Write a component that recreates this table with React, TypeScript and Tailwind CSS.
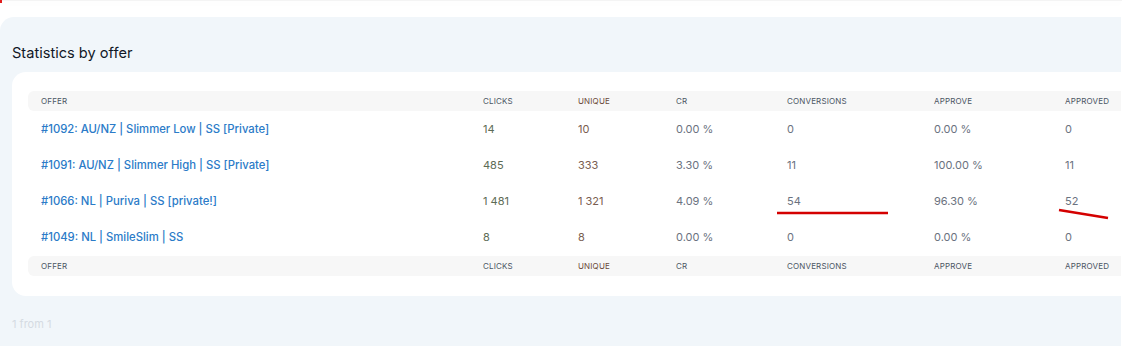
const rows = [
  { offer: '#1092: AU/NZ | Slimmer Low | SS [Private]', clicks: '14', unique: '10', cr: '0.00 %', conv: '0', approve: '0.00 %', approved: '0' },
  { offer: '#1091: AU/NZ | Slimmer High | SS [Private]', clicks: '485', unique: '333', cr: '3.30 %', conv: '11', approve: '100.00 %', approved: '11' },
  { offer: '#1066: NL | Puriva | SS [private!]', clicks: '1 481', unique: '1 321', cr: '4.09 %', conv: '54', approve: '96.30 %', approved: '52' },
  { offer: '#1049: NL | SmileSlim | SS', clicks: '8', unique: '8', cr: '0.00 %', conv: '0', approve: '0.00 %', approved: '0' },
];

const cols = 'grid grid-cols-[442px_95px_98px_111px_147px_131px_1fr] items-center pl-[13px]';

const HeaderRow = ({ className = '' }: { className?: string }) => (
  <div className={`${cols} h-[20px] rounded-[6px] bg-[#f7f7f7] text-[8px] uppercase tracking-[0.02em] text-[#4b5563] ${className}`}>
    <div>Offer</div>
    <div>Clicks</div>
    <div className="text-[#6b4a3a]">Unique</div>
    <div>CR</div>
    <div>Conversions</div>
    <div>Approve</div>
    <div>Approved</div>
  </div>
);

const App = () => {
  return (
    <div className="relative w-[1122px] h-[346px] overflow-hidden bg-white font-['Inter',sans-serif]">
      {/* top card edge */}
      <div className="h-[1px] bg-[#f4f4f4] shadow-[0_2px_7px_rgba(0,0,0,0.06)]" />
      <div className="absolute left-0 top-0 w-[2px] h-[3px] bg-[#e11d1d]" />

      <div className="mt-[16px] w-[1121px] h-[330px] overflow-hidden rounded-tl-[14px] bg-[#f1f6fa] pt-[26px]">
        <h2 className="pl-[12px] text-[14.6px] leading-[20px] text-[#111827]">Statistics by offer</h2>

        <div className="ml-[12px] mt-[9px] w-[1130px] rounded-[14px] bg-white pl-[16px] pt-[19px] pb-[20px]">
          <HeaderRow />
          {rows.map((r) => (
            <div key={r.offer} className={`${cols} h-[36px] text-[11px] text-[#6b7280]`}>
              <a href="#" className="text-[11.3px] font-medium text-[#2b7bc8]">{r.offer}</a>
              <div className="text-[#5d6b55]">{r.clicks}</div>
              <div className="text-[#7a5e50]">{r.unique}</div>
              <div>{r.cr}</div>
              <div>{r.conv}</div>
              <div>{r.approve}</div>
              <div>{r.approved}</div>
            </div>
          ))}
          <HeaderRow className="mt-[1px]" />
        </div>

        <div className="mt-[20px] pl-[12px] text-[11px] leading-[16px] text-[#d5dbe2]">1 from 1</div>
      </div>

      {/* red annotation marks */}
      <svg className="absolute left-0 top-0 pointer-events-none" width="1122" height="346">
        <line x1="777" y1="213" x2="888" y2="213" stroke="#d40000" strokeWidth="2.5" />
        <line x1="1059" y1="210" x2="1108" y2="218" stroke="#d40000" strokeWidth="2.5" />
      </svg>
    </div>
  );
};

export default App;
